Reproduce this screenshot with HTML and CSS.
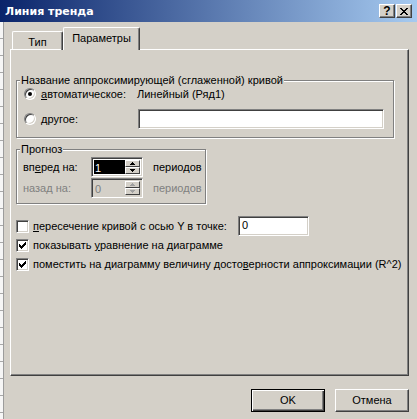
FILE: index.html
```html
<!DOCTYPE html>
<html lang="ru">
  <head>
    <meta charset="UTF-8" />
    <title>Линия тренда</title>
    <link rel="stylesheet" href="styles.css">
  </head>
  <body>
    <div class="titlebar">
      <span class="title">Линия тренда</span>
      <div class="caption-buttons">
        <span class="cap-btn help">?</span>
        <span class="cap-btn">
          <svg width="8" height="7" viewBox="0 0 8 7" shape-rendering="crispEdges">
            <path d="M0 0h2v1h-2zM6 0h2v1h-2zM1 1h2v1h-2zM5 1h2v1h-2zM2 2h4v1h-4zM3 3h2v1h-2zM2 4h4v1h-4zM1 5h2v1h-2zM5 5h2v1h-2zM0 6h2v1h-2zM6 6h2v1h-2z" fill="#000"/>
          </svg>
        </span>
      </div>
    </div>

    <div class="frame">
      <div class="sheet"></div>
      <div class="dialog">
        <div class="tabs">
          <div class="tab">Тип</div>
          <div class="tab active">Параметры</div>
        </div>

        <div class="panel">
          <div class="group name-group">
            <div class="legend">Название аппроксимирующей (сглаженной) кривой</div>
            <div class="row first">
              <span class="radio checked"></span>
              <span class="cap name-cap"><u>а</u>втоматическое:</span>
              <span>Линейный (Ряд1)</span>
            </div>
            <div class="row second">
              <span class="radio"></span>
              <span class="cap name-cap"><u>д</u>ругое:</span>
              <span class="field name-field"></span>
            </div>
          </div>

          <div class="group forecast">
            <div class="legend">Прогноз</div>
            <div class="row spin-row">
              <span class="cap spin-cap">вп<u>е</u>ред на:</span>
              <span class="spin">
                <span class="spin-value selected">1</span>
                <span class="spin-arrows">
                  <span class="arrow-btn"><svg width="5" height="3" viewBox="0 0 5 3" shape-rendering="crispEdges"><path d="M2 0h1v1h1v1h1v1h-5v-1h1v-1h1z" fill="#000"/></svg></span>
                  <span class="arrow-btn"><svg width="5" height="3" viewBox="0 0 5 3" shape-rendering="crispEdges"><path d="M0 0h5v1h-1v1h-1v1h-1v-1h-1v-1h-1z" fill="#000"/></svg></span>
                </span>
              </span>
              <span class="unit">периодов</span>
            </div>
            <div class="row spin-row disabled">
              <span class="cap spin-cap">назад на:</span>
              <span class="spin off">
                <span class="spin-value">0</span>
                <span class="spin-arrows">
                  <span class="arrow-btn"><svg width="5" height="3" viewBox="0 0 5 3" shape-rendering="crispEdges"><path d="M2 0h1v1h1v1h1v1h-5v-1h1v-1h1z" fill="#a0a0a0"/></svg></span>
                  <span class="arrow-btn"><svg width="5" height="3" viewBox="0 0 5 3" shape-rendering="crispEdges"><path d="M0 0h5v1h-1v1h-1v1h-1v-1h-1v-1h-1z" fill="#a0a0a0"/></svg></span>
                </span>
              </span>
              <span class="unit">периодов</span>
            </div>
          </div>

          <div class="check-row intercept">
            <span class="check"></span>
            <span class="cap intercept-cap"><u>п</u>ересечение кривой с осью Y в точке:</span>
            <span class="field small-field">0</span>
          </div>
          <div class="check-row">
            <span class="check on">
              <svg width="9" height="9" viewBox="0 0 9 9" shape-rendering="crispEdges"><path d="M1 3h1v3h-1zM2 4h1v3h-1zM3 5h1v3h-1zM4 4h1v3h-1zM5 3h1v3h-1zM6 2h1v3h-1zM7 1h1v3h-1z" fill="#000"/></svg>
            </span>
            <span class="cap">показывать <u>у</u>равнение на диаграмме</span>
          </div>
          <div class="check-row">
            <span class="check on">
              <svg width="9" height="9" viewBox="0 0 9 9" shape-rendering="crispEdges"><path d="M1 3h1v3h-1zM2 4h1v3h-1zM3 5h1v3h-1zM4 4h1v3h-1zM5 3h1v3h-1zM6 2h1v3h-1zM7 1h1v3h-1z" fill="#000"/></svg>
            </span>
            <span class="cap">поместить на диаграмму величину досто<u>в</u>ерности аппроксимации (R^2)</span>
          </div>
        </div>

        <div class="actions">
          <button class="btn default">OK</button>
          <button class="btn">Отмена</button>
        </div>
      </div>
    </div>
  </body>
</html>
```

FILE: styles.css
```css
* {
  box-sizing: border-box;
}

html,
body {
  margin: 0;
}

body {
  width: 417px;
  height: 419px;
  overflow: hidden;
  background: #d4d0c8;
  font-family: "Liberation Sans", Arial, sans-serif;
  font-size: 11px;
  line-height: 13px;
  color: #000;
}

u {
  text-decoration-thickness: 1px;
  text-underline-offset: 1px;
}

/* title bar */
.titlebar {
  height: 22px;
  display: flex;
  align-items: center;
  justify-content: space-between;
  padding: 0 5px;
  background: linear-gradient(to right, #0a246a, #a6caf0);
}
.title {
  color: #fff;
  font-family: "DejaVu Sans", "Liberation Sans", sans-serif;
  font-weight: bold;
  font-size: 11px;
}
.caption-buttons {
  display: flex;
  gap: 1px;
}
.cap-btn {
  width: 16px;
  height: 14px;
  display: flex;
  align-items: center;
  justify-content: center;
  background: #d4d0c8;
  border: 1px solid;
  border-color: #fff #404040 #404040 #fff;
  box-shadow: inset -1px -1px 0 #808080;
}
.cap-btn.help {
  font-family: "Liberation Sans", sans-serif;
  font-weight: bold;
  font-size: 12px;
}

/* window body */
.frame {
  display: flex;
  height: 397px;
}
.sheet {
  width: 4px;
  background: repeating-linear-gradient(to bottom, #f6f6f6 0 16px, #a8a8a8 16px 17px);
  border-right: 1px solid #9c9c9c;
}
.dialog {
  padding: 5px 0 0 6px;
}

/* tabs */
.tabs {
  display: flex;
  align-items: flex-end;
  margin-left: 2px;
  margin-bottom: -1px;
}
.tab {
  width: 51px;
  height: 19px;
  padding-top: 4px;
  text-align: center;
  border-top: 1px solid #fff;
  border-left: 1px solid #fff;
  border-right: 1px solid #404040;
  box-shadow: inset -1px 0 0 #808080;
  border-radius: 2px 2px 0 0;
}
.tab.active {
  position: relative;
  width: 77px;
  height: 23px;
  padding-top: 4px;
  background: #d4d0c8;
}

/* tab page */
.panel {
  width: 399px;
  height: 327px;
  padding: 0 5px;
  border: 1px solid;
  border-color: #fff #404040 #404040 #fff;
  box-shadow: inset -1px -1px 0 #808080;
}

.group {
  border: 1px solid #808080;
  box-shadow: inset 1px 1px 0 #fff, 1px 1px 0 #fff;
  padding: 0 3px;
}
.legend {
  display: table;
  height: 13px;
  margin-top: -7px;
  padding: 0 1px;
  background: #d4d0c8;
}
.name-group {
  width: 378px;
  margin-top: 30px;
  padding-bottom: 8px;
}
.forecast {
  width: 190px;
  margin-top: 11px;
  padding-bottom: 5px;
}

.row {
  display: flex;
  align-items: center;
  height: 20px;
}
.row.first {
  margin: -3px 0 0 4px;
}
.row.second {
  margin: 5px 0 0 4px;
}
.spin-row {
  margin: 1px 0 0 3px;
}
.cap {
  white-space: nowrap;
}
.name-cap {
  width: 96px;
}
.spin-cap {
  width: 68px;
}
.unit {
  margin-left: 10px;
}
.disabled {
  color: #808080;
}

/* controls */
.radio {
  position: relative;
  width: 12px;
  height: 12px;
  margin-right: 5px;
  border-radius: 50%;
  background: #fff;
  border: 1px solid;
  border-color: #808080 #fff #fff #808080;
  box-shadow: inset 1px 1px 0 #404040, inset -1px -1px 0 #d4d0c8;
}
.radio.checked::after {
  content: "";
  position: absolute;
  left: 3px;
  top: 3px;
  width: 4px;
  height: 4px;
  border-radius: 50%;
  background: #000;
}

.field {
  height: 20px;
  padding: 2px 3px;
  background: #fff;
  border: 1px solid;
  border-color: #808080 #fff #fff #808080;
  box-shadow: inset 1px 1px 0 #404040, inset -1px -1px 0 #d4d0c8;
}
.name-field {
  width: 246px;
  margin-left: 1px;
}
.small-field {
  width: 71px;
}

.spin {
  display: flex;
  width: 52px;
  height: 20px;
  padding: 2px;
  background: #fff;
  border: 1px solid;
  border-color: #808080 #fff #fff #808080;
  box-shadow: inset 1px 1px 0 #404040, inset -1px -1px 0 #d4d0c8;
}
.spin.off {
  background: #d4d0c8;
}
.spin-value {
  flex: 1;
  padding-left: 1px;
  line-height: 16px;
}
.spin-value.selected {
  background: #000;
  color: #fff;
}
.spin-arrows {
  display: flex;
  flex-direction: column;
  width: 15px;
}
.arrow-btn {
  display: flex;
  align-items: center;
  justify-content: center;
  height: 8px;
  background: #d4d0c8;
  border: 1px solid;
  border-color: #fff #404040 #404040 #fff;
}

.check-row {
  display: flex;
  align-items: center;
  height: 19px;
}
.check-row.intercept {
  height: 20px;
  margin-top: 12px;
}
.check {
  display: flex;
  align-items: center;
  justify-content: center;
  width: 13px;
  height: 13px;
  margin-right: 4px;
  background: #fff;
  border: 1px solid;
  border-color: #808080 #fff #fff #808080;
  box-shadow: inset 1px 1px 0 #404040, inset -1px -1px 0 #d4d0c8;
}
.intercept-cap {
  width: 205px;
}

/* buttons */
.actions {
  display: flex;
  justify-content: flex-end;
  gap: 10px;
  width: 399px;
  margin-top: 13px;
}
.btn {
  width: 74px;
  height: 23px;
  padding: 0;
  font: inherit;
  color: #000;
  background: #d4d0c8;
  border: 1px solid;
  border-color: #fff #404040 #404040 #fff;
  box-shadow: inset -1px -1px 0 #808080;
}
.btn.default {
  border-color: #000;
  box-shadow: inset 1px 1px 0 #fff, inset -1px -1px 0 #404040, inset -2px -2px 0 #808080;
}
```
